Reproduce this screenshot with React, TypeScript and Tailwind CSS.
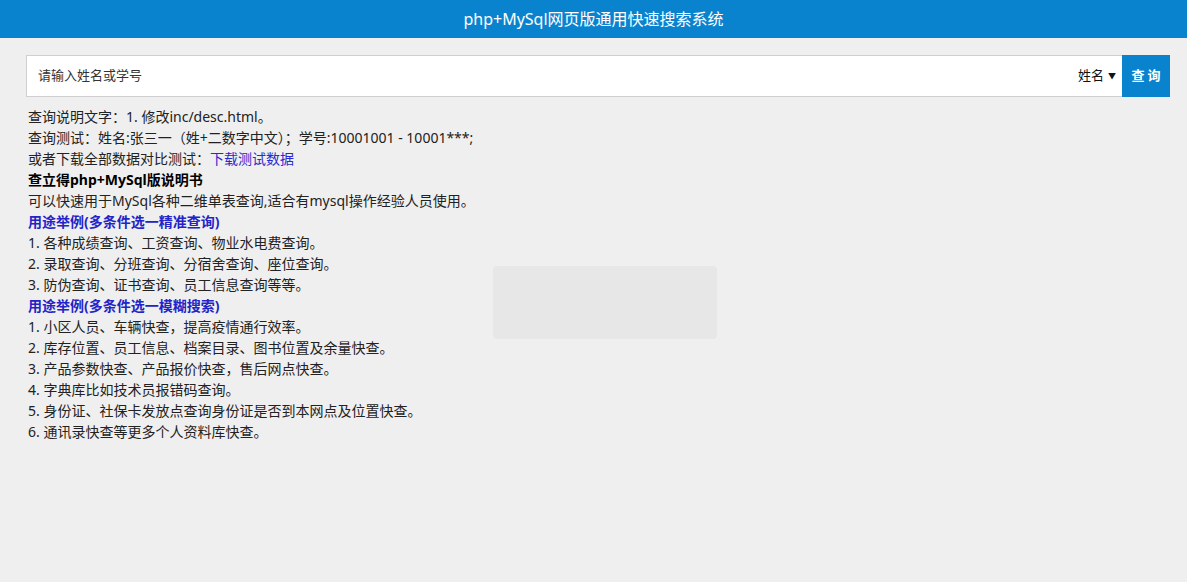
const usageA = [
  "1. 各种成绩查询、工资查询、物业水电费查询。",
  "2. 录取查询、分班查询、分宿舍查询、座位查询。",
  "3. 防伪查询、证书查询、员工信息查询等等。",
];

const usageB = [
  "1. 小区人员、车辆快查，提高疫情通行效率。",
  "2. 库存位置、员工信息、档案目录、图书位置及余量快查。",
  "3. 产品参数快查、产品报价快查，售后网点快查。",
  "4. 字典库比如技术员报错码查询。",
  "5. 身份证、社保卡发放点查询身份证是否到本网点及位置快查。",
  "6. 通讯录快查等更多个人资料库快查。",
];

export default function App() {
  return (
    <div
      className="relative min-h-[582px] bg-[#efefef] text-[#222] text-[13px]"
      style={{ fontFamily: '"Noto Sans", "Noto Sans CJK SC", sans-serif' }}
    >
      <header className="h-[38px] bg-[#0a83cf] flex items-center justify-center">
        <h1 className="text-white text-[16px] leading-none">php+MySql网页版通用快速搜索系统</h1>
      </header>

      <div className="pl-[26px] pr-[17px] pt-[17px]">
        <div className="flex h-[42px] border border-[#cfcfcf] bg-white">
          <input
            className="flex-1 px-[11px] outline-none text-[13px] text-[#333] placeholder:text-[#333]"
            placeholder="请输入姓名或学号"
          />
          <div className="flex items-center gap-[4px] pr-[6px] text-[13px] text-[#111]">
            <span>姓名</span>
            <span className="text-[8px]">▼</span>
          </div>
          <button className="w-[48px] -my-px -mr-px bg-[#0a83cf] text-white font-bold text-[13px] tracking-[3px] pl-[3px]">
            查询
          </button>
        </div>

        <div className="pt-[9px] pl-[2px] leading-[21px] text-[14px]">
          <p>查询说明文字：1. 修改inc/desc.html。</p>
          <p>查询测试：姓名:张三一（姓+二数字中文）；学号:10001001 - 10001***;</p>
          <p>
            或者下载全部数据对比测试：<a className="text-[#2a2ad0]">下载测试数据</a>
          </p>
          <p className="font-bold text-black">查立得php+MySql版说明书</p>
          <p>可以快速用于MySql各种二维单表查询,适合有mysql操作经验人员使用。</p>
          <p className="font-bold text-[#2323c8]">用途举例(多条件选一精准查询)</p>
          {usageA.map((t) => (
            <p key={t}>{t}</p>
          ))}
          <p className="font-bold text-[#2323c8]">用途举例(多条件选一模糊搜索)</p>
          {usageB.map((t) => (
            <p key={t}>{t}</p>
          ))}
        </div>
      </div>

      <div className="absolute left-[493px] top-[266px] w-[224px] h-[73px] rounded-[4px] bg-[#e7e7e7]" />
    </div>
  );
}
